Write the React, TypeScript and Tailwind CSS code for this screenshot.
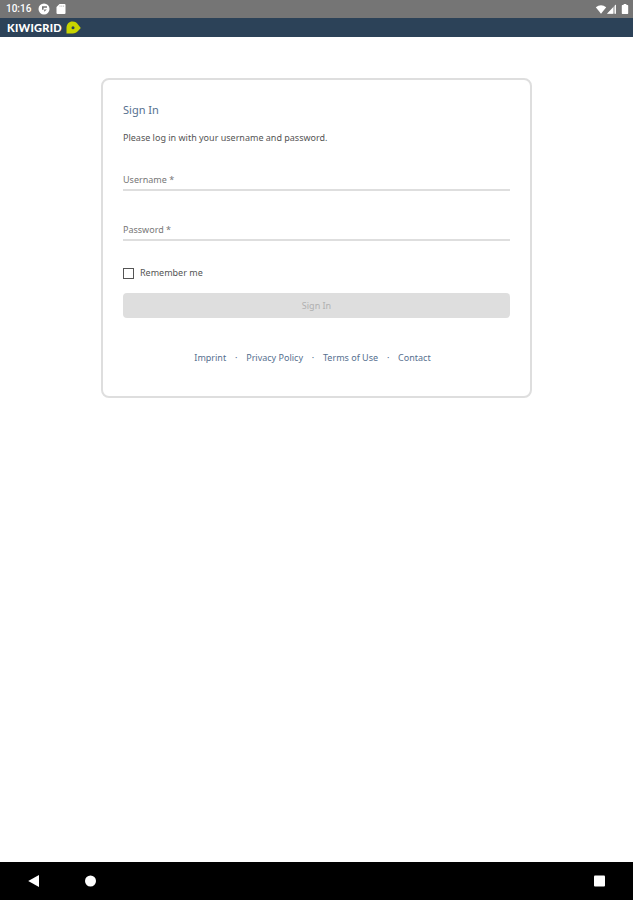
import { useState } from "react"

interface TextFieldProps {
  id: string
  label: string
  type: string
  value: string
  onChange: (value: string) => void
}

const links = ["Imprint", "Privacy Policy", "Terms of Use", "Contact"]

function StatusBar() {
  return (
    <div className="flex h-[18px] shrink-0 items-center bg-[#757575] pr-1 pl-1.5 text-white">
      <span className="w-8 font-[Roboto,sans-serif] text-[10px] leading-4 font-medium">10:16</span>
      <svg viewBox="0 0 12 12" className="h-3 w-3" aria-hidden="true">
        <circle cx="6" cy="6" r="5.5" fill="#fff" />
        <path d="M4 3.200h5v1.600H5.600v2H4z" fill="#757575" />
        <path d="M6.200 8.800V6.400h2.600z" fill="#757575" />
      </svg>
      <svg viewBox="0 0 10 12" className="ml-1.5 h-3 w-2.5" aria-hidden="true">
        <path d="M3.5 1H8.5a1 1 0 0 1 1 1v8a1 1 0 0 1-1 1H1.5a1 1 0 0 1-1-1V4z" fill="#fff" />
        <path d="M4 2.5v1.300M5.8 2.5v1.300M7.6 2.5v1.300" stroke="#a0a0a0" strokeWidth=".7" />
      </svg>
      <svg viewBox="0 0 34 12" className="ml-auto h-3 w-[34px]" aria-hidden="true">
        <path d="M.8 4.3Q6 .2 11.2 4.3L6 10.8z" fill="#fff" />
        <path d="M21 1.3v9.4h-9z" fill="#bdbdbd" />
        <path d="M18 4.4v6.3h-6z" fill="#fff" />
        <path d="M20.4 2v8.7" stroke="#fff" strokeWidth="1" />
        <path d="M27.4 2h1.2V1h2.8v1h1.2q.6 0 .6.7v7.6q0 .7-.6.7h-5.2q-.6 0-.6-.7V2.7q0-.7.6-.7z" fill="#fff" />
      </svg>
    </div>
  )
}

function Header() {
  return (
    <header className="flex h-[19px] shrink-0 items-center gap-1 bg-[#2c4258] px-[7px] text-white">
      <span className="font-[Lato,sans-serif] text-[11px] leading-4 font-black tracking-wide">KIWIGRID</span>
      <svg viewBox="0 0 15 13" className="h-[13px] w-[15px]" aria-hidden="true">
        <path d="M.5 12.500V7C.5 3.200 3 .5 6.500.5c2.700 0 4.300 1.200 5.500 3L14.800 7 12 10c-1.300 1.600-3 2.500-5.200 2.500z" fill="#c8d400" />
        <circle cx="7" cy="6.700" r="1.500" fill="#2c4258" />
      </svg>
    </header>
  )
}

function TextField({ id, label, type, value, onChange }: TextFieldProps) {
  return (
    <div className="grid h-[19px] border-b-2 border-[#dedede]">
      <label
        htmlFor={id}
        className={value ? "sr-only" : "pointer-events-none z-10 col-start-1 row-start-1 text-[9px] leading-4 text-[#777]"}
      >
        {label} *
      </label>
      <input
        id={id}
        type={type}
        required
        value={value}
        onChange={(e) => onChange(e.target.value)}
        className="col-start-1 row-start-1 h-4 w-full bg-transparent text-[9px] leading-4 text-[#444] outline-none"
      />
    </div>
  )
}

function NavigationBar() {
  return (
    <nav className="flex h-[38px] shrink-0 items-center bg-black px-[27px]">
      <button type="button" aria-label="Back" className="mr-[43px]">
        <svg viewBox="0 0 14 14" className="h-3.5 w-3.5" fill="#fff">
          <path d="M1.2 7 12 1v12z" />
        </svg>
      </button>
      <button type="button" aria-label="Home">
        <svg viewBox="0 0 14 14" className="h-3.5 w-3.5" fill="#fff">
          <circle cx="6.5" cy="7" r="5.5" />
        </svg>
      </button>
      <button type="button" aria-label="Recent apps" className="ml-auto">
        <svg viewBox="0 0 14 14" className="h-3.5 w-3.5" fill="#fff">
          <rect x="2" y="1.5" width="11" height="11" rx="1" />
        </svg>
      </button>
    </nav>
  )
}

export default function App() {
  const [username, setUsername] = useState("")
  const [password, setPassword] = useState("")
  const [remember, setRemember] = useState(false)

  return (
    <div className="flex min-h-screen flex-col bg-white font-['Noto_Sans',sans-serif]">
      <StatusBar />
      <Header />
      <main className="flex-1 px-[101px] pt-[41px]">
        <form
          onSubmit={(e) => e.preventDefault()}
          className="rounded-lg border-2 border-[#dedede] px-5 pt-5 pb-[30px]"
        >
          <h1 className="text-[11px] leading-5 text-[#56708f]">Sign In</h1>
          <p className="mt-2 text-[9px] leading-5 text-[#555]">Please log in with your username and password.</p>

          <div className="mt-6 flex flex-col gap-[31px]">
            <TextField id="username" label="Username" type="text" value={username} onChange={setUsername} />
            <TextField id="password" label="Password" type="password" value={password} onChange={setPassword} />
          </div>

          <label className="mt-6 flex items-center gap-1.5 text-[9px] leading-4 text-[#555]">
            <input
              type="checkbox"
              checked={remember}
              onChange={(e) => setRemember(e.target.checked)}
              className="h-[11px] w-[11px] appearance-none border border-[#555] checked:bg-[#2c4258]"
            />
            Remember me
          </label>

          <button
            type="submit"
            disabled={!username || !password}
            className="mt-3 block h-[25px] w-full rounded-sm bg-[#2c4258] text-[9px] text-white disabled:bg-[#dedede] disabled:text-[#b0b0b0]"
          >
            Sign In
          </button>

          <ul className="mt-8 mr-2 flex justify-center text-[9px] leading-4 text-[#56708f]">
            {links.map((link, i) => (
              <li key={link}>
                {i > 0 && <span className="inline-block w-5 text-center">·</span>}
                <a href="#">{link}</a>
              </li>
            ))}
          </ul>
        </form>
      </main>
      <NavigationBar />
    </div>
  )
}
